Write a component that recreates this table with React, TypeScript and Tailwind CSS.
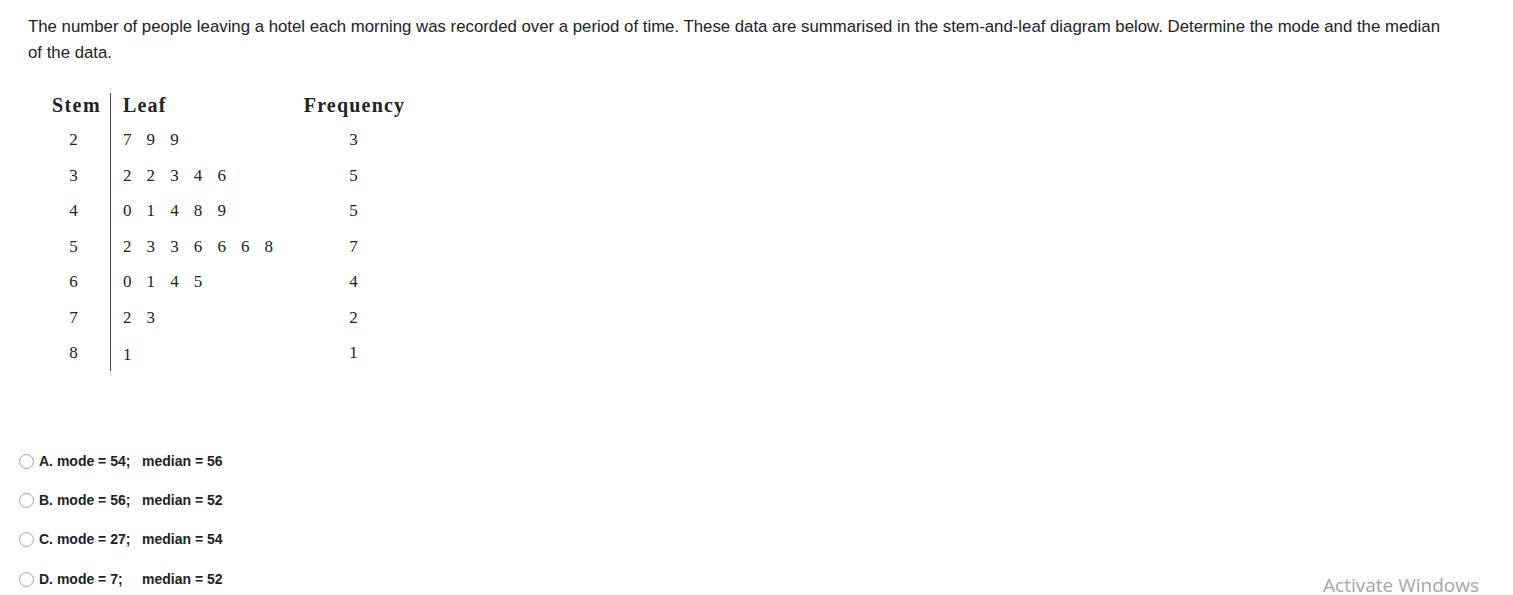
const rows: { stem: number; leaves: number[]; freq: number }[] = [
  { stem: 2, leaves: [7, 9, 9], freq: 3 },
  { stem: 3, leaves: [2, 2, 3, 4, 6], freq: 5 },
  { stem: 4, leaves: [0, 1, 4, 8, 9], freq: 5 },
  { stem: 5, leaves: [2, 3, 3, 6, 6, 6, 8], freq: 7 },
  { stem: 6, leaves: [0, 1, 4, 5], freq: 4 },
  { stem: 7, leaves: [2, 3], freq: 2 },
  { stem: 8, leaves: [1], freq: 1 },
]

const options = [
  { label: 'A. mode = 54;', median: 'median = 56' },
  { label: 'B. mode = 56;', median: 'median = 52' },
  { label: 'C. mode = 27;', median: 'median = 54' },
  { label: 'D. mode = 7;', median: 'median = 52' },
]

function StemLeaf() {
  return (
    <div className="ml-[45px] mt-[28px] w-[370px] font-['Liberation_Serif',serif] text-[#222]">
      <div className="flex">
        <div className="w-[65px]">
          <div className="flex h-[24px] items-center justify-center pl-[2px] pr-[4px] text-[20px] font-bold tracking-[1.4px]">Stem</div>
          <div className="h-[5px]" />
          {rows.map((r) => (
            <div key={r.stem} className="flex h-[35.5px] items-center justify-center pr-[8px] text-[17px]">
              {r.stem}
            </div>
          ))}
        </div>
        <div className="w-[193px] border-l border-[#444] pl-[12px]">
          <div className="flex h-[24px] items-center text-[20px] font-bold tracking-[1.2px]">Leaf</div>
          <div className="h-[5px]" />
          {rows.map((r, idx) => (
            <div
              key={r.stem}
              className={idx === rows.length - 1 ? 'flex h-[33px] items-start pt-[7px] text-[17px]' : 'flex h-[35.5px] items-center text-[17px]'}
            >
              {r.leaves.map((l, i) => (
                <span key={i} className="inline-block w-[23.6px]">
                  {l}
                </span>
              ))}
            </div>
          ))}
        </div>
        <div className="w-[101px]">
          <div className="flex h-[24px] items-center justify-center pl-[2px] text-[20px] font-bold tracking-[1.2px]">Frequency</div>
          <div className="h-[5px]" />
          {rows.map((r) => (
            <div key={r.stem} className="flex h-[35.5px] items-center justify-center text-[17px]">
              {r.freq}
            </div>
          ))}
        </div>
      </div>
    </div>
  )
}

export default function App() {
  return (
    <div className="relative h-[595px] w-full overflow-hidden bg-white font-['Liberation_Sans',Arial,sans-serif]">
      <p className="ml-[28px] w-[1424px] pt-[14px] text-[16.8px] leading-[25.6px] text-[#222]">
        The number of people leaving a hotel each morning was recorded over a period of time. These data are summarised in
        the stem-and-leaf diagram below. Determine the mode and the median of the data.
      </p>

      <StemLeaf />

      <div className="ml-[19px] mt-[71px] flex flex-col">
        {options.map((o) => (
          <label key={o.label} className="flex h-[39.3px] items-center text-[14px] font-bold text-[#222]">
            <span className="mr-[5px] inline-block h-[15px] w-[15px] rounded-full border border-[#a0a0a0] bg-white" />
            <span className="w-[103px]">{o.label}</span>
            <span>{o.median}</span>
          </label>
        ))}
      </div>

      <div className="absolute bottom-[2px] right-[34px] font-['Open_Sans',sans-serif] text-[19px] leading-[16px] text-[#a6a6a6]">
        Activate Windows
      </div>
    </div>
  )
}
